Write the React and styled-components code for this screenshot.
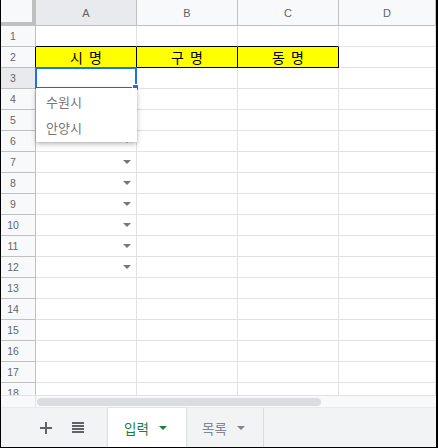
import React from "react";
import styled, { createGlobalStyle } from "styled-components";

const GlobalStyle = createGlobalStyle`
  html, body {
    margin: 0;
    padding: 0;
    background: #fff;
  }
  body {
    font-family: "Liberation Sans", "Noto Sans CJK KR", Arial, sans-serif;
  }
`;

const Frame = styled.div`
  width: 438px;
  height: 448px;
  box-sizing: border-box;
  border-left: 1px solid #000;
  border-right: 2px solid #000;
  border-bottom: 1px solid #000;
  display: flex;
  flex-direction: column;
  overflow: hidden;
  background: #fff;
`;

const Sheet = styled.div`
  flex: 0 0 395px;
  overflow: hidden;
`;

const Row = styled.div`
  display: grid;
  grid-template-columns: 35px 101px 101px 101px 1fr;
  height: ${({ $height }) => $height || 21}px;
`;

const Corner = styled.div`
  box-sizing: border-box;
  background: #f8f9fa;
  border-right: 4px solid #c0c0c0;
  border-bottom: 4px solid #c0c0c0;
`;

const ColHeader = styled.div`
  box-sizing: border-box;
  background: ${({ $active }) => ($active ? "#e8eaed" : "#f8f9fa")};
  border-right: 1px solid #c0c0c0;
  border-bottom: 1px solid #c0c0c0;
  display: flex;
  align-items: center;
  justify-content: center;
  font-size: 11px;
  color: #5f6368;
`;

const RowHeader = styled.div`
  box-sizing: border-box;
  background: ${({ $active }) => ($active ? "#e8eaed" : "#f8f9fa")};
  border-right: 1px solid ${({ $edge }) => ($edge ? "#000" : "#c0c0c0")};
  border-bottom: 1px solid #c0c0c0;
  display: flex;
  align-items: center;
  justify-content: center;
  padding-right: 10px;
  font-size: 10.5px;
  color: #666;
`;

const Cell = styled.div`
  box-sizing: border-box;
  position: relative;
  background: ${({ $fill }) => $fill || "#fff"};
  border-right: 1px solid ${({ $edge }) => ($edge ? "#000" : "#e2e2e2")};
  border-bottom: 1px solid
    ${({ $edge, $bottomEdge }) => ($edge || $bottomEdge ? "#000" : "#e2e2e2")};
  display: flex;
  align-items: center;
  justify-content: ${({ $center }) => ($center ? "center" : "flex-end")};
  padding-right: ${({ $center }) => ($center ? 0 : 5)}px;
  font-family: "Noto Sans CJK KR", "Liberation Sans", sans-serif;
  font-size: 14px;
  line-height: 20px;
  word-spacing: 3px;
  color: #000;
`;

const Arrow = styled.span`
  width: 0;
  height: 0;
  border-left: 4px solid transparent;
  border-right: 4px solid transparent;
  border-top: 4px solid ${({ $color }) => $color || "#777"};
`;

const Selection = styled.div`
  position: absolute;
  top: -1px;
  left: -1px;
  width: 102px;
  height: 22px;
  box-sizing: border-box;
  border: 2px solid #1a73e8;
  z-index: 4;

  &::after {
    content: "";
    position: absolute;
    right: -4px;
    bottom: -4px;
    width: 5px;
    height: 5px;
    background: #1a73e8;
    border: 1px solid #fff;
  }
`;

const Dropdown = styled.div`
  position: absolute;
  top: 20px;
  left: 0;
  width: 101px;
  padding: 1px 0;
  background: #fff;
  box-shadow: 0 2px 5px rgba(0, 0, 0, 0.28), 0 0 1px rgba(0, 0, 0, 0.2);
  z-index: 5;
`;

const Option = styled.div`
  height: 26px;
  display: flex;
  align-items: center;
  padding-left: 10px;
  font-family: "Noto Sans CJK KR", "Liberation Sans", sans-serif;
  font-size: 13px;
  color: #777;
`;

const ScrollArea = styled.div`
  flex: 0 0 12px;
  box-sizing: border-box;
  display: flex;
  align-items: center;
  background: #f8f9fa;
  border-top: 1px solid #e2e2e2;
`;

const ScrollGutter = styled.div`
  width: 35px;
  height: 100%;
  box-sizing: border-box;
  border-right: 1px solid #e2e2e2;
`;

const Thumb = styled.div`
  margin-left: 1px;
  width: 284px;
  height: 8px;
  border-radius: 4px;
  background: #dadce0;
`;

const TabBar = styled.div`
  flex: 1;
  display: flex;
  align-items: stretch;
  background: #f1f3f4;
  border-top: 1px solid #e8eaed;
  padding-left: 39px;
`;

const IconButton = styled.div`
  width: ${({ $width }) => $width}px;
  display: flex;
  align-items: center;
  justify-content: flex-start;
`;

const Tab = styled.div`
  width: 78px;
  box-sizing: border-box;
  display: flex;
  align-items: center;
  gap: 10px;
  padding-left: 16px;
  background: ${({ $active }) => ($active ? "#fff" : "transparent")};
  box-shadow: ${({ $active }) =>
    $active ? "-1px 0 1px rgba(0,0,0,0.08), 1px 0 1px rgba(0,0,0,0.08)" : "none"};
  border-right: ${({ $active }) => ($active ? "none" : "1px solid #dadce0")};
  font-family: "Noto Sans CJK KR", "Liberation Sans", sans-serif;
  font-size: 13.5px;
  color: ${({ $active }) => ($active ? "#188038" : "#80868b")};
`;

const PlusIcon = () => (
  <svg width="12" height="12" viewBox="0 0 12 12">
    <rect x="5" y="0" width="2" height="12" fill="#5f6368" />
    <rect x="0" y="5" width="12" height="2" fill="#5f6368" />
  </svg>
);

const ListIcon = () => (
  <svg width="12" height="11" viewBox="0 0 12 11">
    {[0, 3, 6, 9].map((y) => (
      <rect key={y} x="0" y={y} width="12" height="2" fill="#5f6368" />
    ))}
  </svg>
);

const columns = ["A", "B", "C", "D"];
const titles = ["시 명", "구 명", "동 명"];
const rows = Array.from({ length: 18 }, (_, i) => i + 1);

const App = () => {
  return (
    <>
      <GlobalStyle />
      <Frame>
        <Sheet>
          <Row $height={26}>
            <Corner />
            {columns.map((c, i) => (
              <ColHeader key={c} $active={i === 0}>
                {c}
              </ColHeader>
            ))}
          </Row>
          {rows.map((r) => (
            <Row key={r}>
              <RowHeader $active={r === 3} $edge={r === 2}>
                {r}
              </RowHeader>
              {columns.map((c, i) => {
                if (r === 2 && i < 3) {
                  return (
                    <Cell key={c} $fill="#ffff00" $edge $center>
                      {titles[i]}
                    </Cell>
                  );
                }
                if (r === 3 && i === 0) {
                  return (
                    <Cell key={c}>
                      <Selection />
                      <Dropdown>
                        <Option>수원시</Option>
                        <Option>안양시</Option>
                      </Dropdown>
                    </Cell>
                  );
                }
                return (
                  <Cell key={c} $bottomEdge={r === 1 && i < 3}>
                    {i === 0 && r >= 4 && r <= 12 && <Arrow />}
                  </Cell>
                );
              })}
            </Row>
          ))}
        </Sheet>
        <ScrollArea>
          <ScrollGutter />
          <Thumb />
        </ScrollArea>
        <TabBar>
          <IconButton $width={32}>
            <PlusIcon />
          </IconButton>
          <IconButton $width={36}>
            <ListIcon />
          </IconButton>
          <Tab $active>
            입력
            <Arrow $color="#188038" />
          </Tab>
          <Tab>
            목록
            <Arrow $color="#80868b" />
          </Tab>
        </TabBar>
      </Frame>
    </>
  );
};

export default App;
